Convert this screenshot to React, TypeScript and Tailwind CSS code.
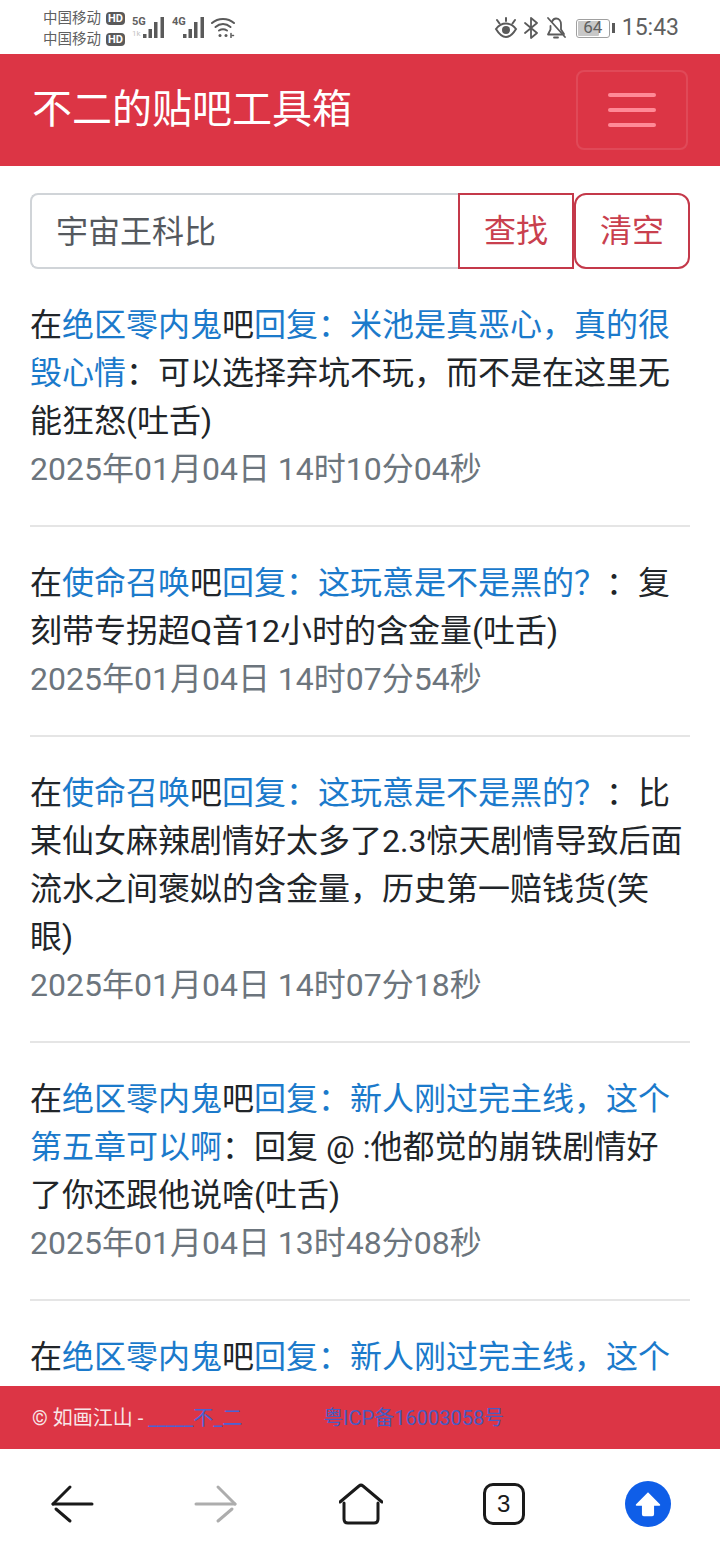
import React from 'react';

const cjk = "font-['Roboto','Noto_Sans_CJK_SC',sans-serif]";

interface Post {
  forum: string;
  title: string;
  body: string;
  time: string;
}

const posts: Post[] = [
  {
    forum: '绝区零内鬼',
    title: '回复：米池是真恶心，真的很毁心情',
    body: '：可以选择弃坑不玩，而不是在这里无能狂怒(吐舌)',
    time: '2025年01月04日 14时10分04秒',
  },
  {
    forum: '使命召唤',
    title: '回复：这玩意是不是黑的？',
    body: '：复刻带专拐超Q音12小时的含金量(吐舌)',
    time: '2025年01月04日 14时07分54秒',
  },
  {
    forum: '使命召唤',
    title: '回复：这玩意是不是黑的？',
    body: '：比某仙女麻辣剧情好太多了2.3惊天剧情导致后面流水之间褒姒的含金量，历史第一赔钱货(笑眼)',
    time: '2025年01月04日 14时07分18秒',
  },
  {
    forum: '绝区零内鬼',
    title: '回复：新人刚过完主线，这个第五章可以啊',
    body: '：回复 @ :他都觉的崩铁剧情好了你还跟他说啥(吐舌)',
    time: '2025年01月04日 13时48分08秒',
  },
  {
    forum: '绝区零内鬼',
    title: '回复：新人刚过完主线，这个第五章可以啊',
    body: '',
    time: '',
  },
];

const Signal = () => (
  <svg width="22" height="21" viewBox="0 0 22 21" fill="#5a5a5a">
    <rect x="0" y="17" width="3.5" height="4" />
    <rect x="5.500" y="12" width="3.500" height="9" />
    <rect x="11" y="5" width="3.500" height="16" />
    <rect x="17.500" y="0" width="3.500" height="21" />
  </svg>
);

const StatusBar = () => (
  <div className="h-[54px] flex items-center justify-between pl-[43px] pr-[41px] bg-white text-[#5f5f5f]">
    <div className="flex items-center">
      <div className="flex flex-col gap-[3px] mt-[4px] text-[14.5px] leading-[18px]">
        {[0, 1].map((i) => (
          <div key={i} className="flex items-center gap-[5px]">
            <span>中国移动</span>
            <span className="bg-[#5a5a5a] text-white rounded-[4px] text-[11px] leading-[13px] font-bold px-[2px]">HD</span>
          </div>
        ))}
      </div>
      <div className="relative ml-[7px] mt-[1px] flex items-end w-[33px] h-[21px] justify-end">
        <span className="absolute left-0 top-[-1px] text-[11px] leading-[11px] font-bold">5G</span>
        <span className="absolute left-0 top-[13px] text-[8px] leading-[8px] text-[#c4c4c4]">1k</span>
        <Signal />
      </div>
      <div className="relative ml-[7px] mt-[1px] flex items-end w-[33px] h-[21px] justify-end">
        <span className="absolute left-0 top-[-1px] text-[11px] leading-[11px] font-bold">4G</span>
        <Signal />
      </div>
      <svg className="ml-[6px] mt-[1px]" width="24" height="21" viewBox="0 0 24 21" fill="none" stroke="#5a5a5a" strokeWidth="2" strokeLinecap="round">
        <path d="M1 6C7 0.500 17 0.500 23 6" />
        <path d="M4.500 10C9 6 15 6 19.500 10" />
        <path d="M8 13.500C10.500 12 13.500 12 16 13.500" />
        <circle cx="9" cy="18.500" r="1.500" fill="#5a5a5a" stroke="none" />
        <circle cx="15" cy="18.500" r="1.500" fill="#5a5a5a" stroke="none" />
        <path d="M20 16.500v4M22.500 18.500h-1" strokeWidth="1.500" />
      </svg>
    </div>
    <div className="flex items-center mt-[2px]">
      <svg width="24" height="22" viewBox="0 0 24 22" fill="none" stroke="#5a5a5a" strokeWidth="2" strokeLinecap="round">
        <path d="M2 12C5 8 8.500 6.500 12 6.500s7 1.500 10 5.500C19 17 15.500 20 12 20s-7-3-10-8Z" />
        <circle cx="12" cy="13" r="4" fill="#5a5a5a" stroke="none" />
        <path d="M3 3l2.500 3.500M21 3l-2.500 3.500M12 1v3" />
      </svg>
      <svg className="ml-[4px]" width="18" height="22" viewBox="0 0 18 22" fill="none" stroke="#5a5a5a" strokeWidth="1.800" strokeLinejoin="round" strokeLinecap="round">
        <path d="M3 6l12 10-6 5V1l6 5L3 16" />
      </svg>
      <svg className="ml-[5px]" width="22" height="24" viewBox="0 0 22 24" fill="none" stroke="#5a5a5a" strokeWidth="1.800" strokeLinecap="round" strokeLinejoin="round">
        <path d="M7 5.500C8 3.500 9.500 2.500 11 2.500c3 0 5 2.500 5 6v5l3 4.500M5.500 10v3.500L3 18.500h14" />
        <path d="M3 2l17 19" />
        <path d="M9 21.500h4" />
      </svg>
      <div className="ml-[9px] relative w-[34px] h-[19px] rounded-[3px] border border-[#a0a0a0] p-[1px]">
        <div className="h-full w-[21px] bg-[#c8c8c8] rounded-[1px]" />
        <span className="absolute inset-0 flex items-center justify-center text-[17px] text-[#5f5f5f]">64</span>
      </div>
      <div className="ml-[2px] w-[3px] h-[10px] bg-[#5a5a5a]" />
      <span className="ml-[7px] text-[23px] leading-[26px] font-['Roboto',sans-serif] text-[#5f5f5f]">15:43</span>
    </div>
  </div>
);

const Navbar = () => (
  <div className="h-[112px] bg-[#dc3545] flex items-center justify-between pl-[32px] pr-[32px]">
    <span className="text-white text-[40px] leading-[60px]">不二的贴吧工具箱</span>
    <button className="w-[112px] h-[80px] rounded-[8px] border-2 border-white/10 flex flex-col items-center justify-center gap-[11px]">
      <span className="block w-[48px] h-[4px] rounded-[2px] bg-[#ff8a97]" />
      <span className="block w-[48px] h-[4px] rounded-[2px] bg-[#ff8a97]" />
      <span className="block w-[48px] h-[4px] rounded-[2px] bg-[#ff8a97]" />
    </button>
  </div>
);

const SearchRow = () => (
  <div className="flex items-stretch h-[76px] mt-[27px] mb-[32px] mx-[30px] text-[32px]">
    <input
      readOnly
      value="宇宙王科比"
      className="flex-1 min-w-0 h-full pl-[24px] pr-[26px] pb-[4px] rounded-l-[8px] border-2 border-r-0 border-[#d0d4d8] text-[#55595e] bg-white outline-none"
    />
    <button className="w-[116px] h-full border-2 border-[#c4394a] text-[#c9404e] bg-white">查找</button>
    <button className="w-[116px] h-full border-2 border-[#c4394a] text-[#c9404e] bg-white rounded-[12px]">清空</button>
  </div>
);

const PostItem = ({ post, last }: { post: Post; last: boolean }) => (
  <div className="px-[30px]">
    <p className="text-[32px] leading-[48px] text-[#212529]">
      在<a className="text-[#1b7acb]">{post.forum}</a>吧<a className="text-[#1b7acb]">{post.title}</a>
      {post.body}
    </p>
    {post.time && <p className="text-[32px] leading-[48px] text-[#6c757d]">{post.time}</p>}
    {!last && <hr className="mt-[32px] mb-[32px] border-t-2 border-[#e5e5e5]" />}
  </div>
);

const Footer = () => (
  <div className="h-[63px] shrink-0 bg-[#dc3545] flex items-center pl-[32px] text-[20px] text-[#f8e6e8]">
    <span className="whitespace-pre">© 如画江山 - </span>
    <a className="text-[#4a63d4] w-[175px] shrink-0">_____不_二</a>
    <a className="text-[#4a5bc0]">粤ICP备16003058号</a>
  </div>
);

const BrowserBar = () => (
  <div className="h-[111px] shrink-0 bg-white flex items-center justify-between pl-[50px] pr-[49px] pb-[2px]">
    <svg width="44" height="40" viewBox="0 0 44 40" fill="none" stroke="#1a1a1a" strokeWidth="3" strokeLinecap="round" strokeLinejoin="round">
      <path d="M3 20h39" />
      <path d="M20 3L3 20" />
      <path d="M6 25l14 12" />
    </svg>
    <svg width="44" height="40" viewBox="0 0 44 40" fill="none" stroke="#adadad" strokeWidth="3" strokeLinecap="round" strokeLinejoin="round">
      <path d="M2 20h39" />
      <path d="M24 3l17 17" />
      <path d="M38 25L24 37" />
    </svg>
    <svg width="44" height="42" viewBox="0 0 44 42" fill="none" stroke="#1a1a1a" strokeWidth="3" strokeLinecap="round" strokeLinejoin="round">
      <path d="M1 19L20 3c1.200-1 2.800-1 4 0l19 16" />
      <path d="M5 20v16c0 2.500 1.500 4 4 4h26c2.500 0 4-1.500 4-4V20" />
    </svg>
    <div className="w-[42px] h-[42px] rounded-[10px] border-[3px] border-[#1a1a1a] flex items-center justify-center text-[24px] leading-none text-[#1a1a1a] font-['Liberation_Sans',sans-serif]">
      3
    </div>
    <div className="w-[46px] h-[46px] rounded-full bg-[#0f5ee8] flex items-center justify-center">
      <svg width="28" height="28" viewBox="0 0 30 30" fill="#fff">
        <path d="M15 2.500 L28 15.500 Q28.500 17 27 17 H21.500 V26 Q21.500 28 19.500 28 H10.500 Q8.500 28 8.500 26 V17 H3 Q1.500 17 2 15.500 Z" />
      </svg>
    </div>
  </div>
);

export default function App() {
  return (
    <div className={`w-[720px] h-[1560px] flex flex-col bg-white overflow-hidden ${cjk}`}>
      <StatusBar />
      <Navbar />
      <div className="flex-1 min-h-0 overflow-hidden">
        <SearchRow />
        {posts.map((post, i) => (
          <PostItem key={i} post={post} last={i === posts.length - 1} />
        ))}
      </div>
      <Footer />
      <BrowserBar />
    </div>
  );
}
